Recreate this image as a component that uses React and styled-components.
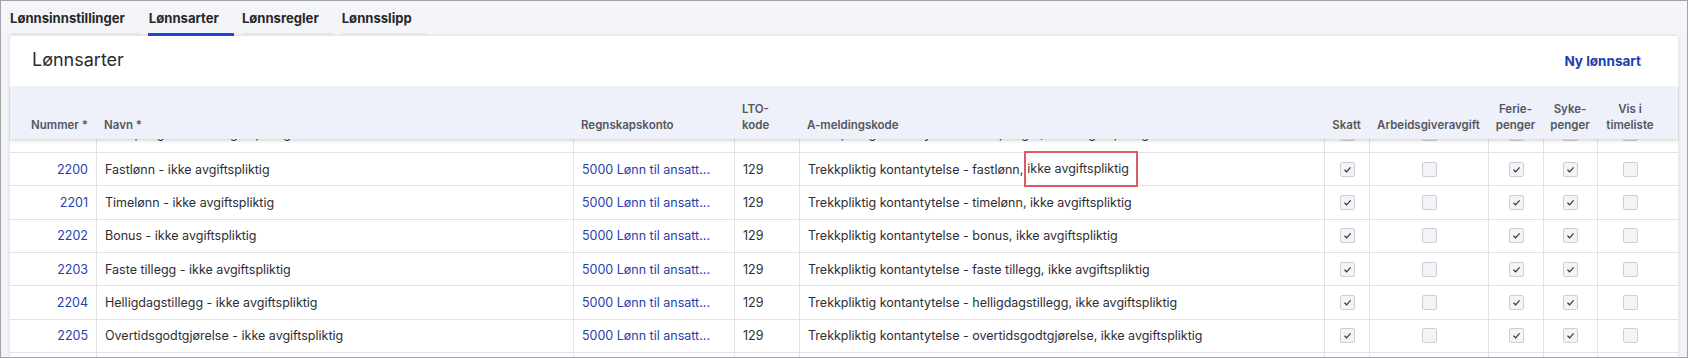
import React from 'react';
import styled, { createGlobalStyle } from 'styled-components';

const COLS = '86px 477px 161px 65px 525px 45px 119px 55px 54px 80px';

const COLORS = {
  page: '#f4f5f9',
  band: '#eef0fa',
  line: '#e1e2e6',
  text: '#2d2e33',
  head: '#55575e',
  link: '#1e3fae',
  blue: '#1d47cf',
  mark: '#dc5b62',
};

const GlobalStyle = createGlobalStyle`
  body {
    margin: 0;
    font-family: Inter, "Noto Sans", sans-serif;
    color: ${COLORS.text};
  }
`;

const columns = [
  { label: 'Nummer *', align: 'right' },
  { label: 'Navn *' },
  { label: 'Regnskapskonto' },
  { label: ['LTO-', 'kode'] },
  { label: 'A-meldingskode' },
  { label: 'Skatt', align: 'center' },
  { label: 'Arbeidsgiveravgift', align: 'center' },
  { label: ['Ferie-', 'penger'], align: 'center' },
  { label: ['Syke-', 'penger'], align: 'center' },
  { label: ['Vis i', 'timeliste'], align: 'center' },
];

const rows = [
  { nr: '2199', name: 'Feriepenger - ikke avgiftspliktig', code: 'feriepenger' },
  { nr: '2200', name: 'Fastlønn - ikke avgiftspliktig', code: 'fastlønn', marked: true },
  { nr: '2201', name: 'Timelønn - ikke avgiftspliktig', code: 'timelønn' },
  { nr: '2202', name: 'Bonus - ikke avgiftspliktig', code: 'bonus' },
  { nr: '2203', name: 'Faste tillegg - ikke avgiftspliktig', code: 'faste tillegg' },
  { nr: '2204', name: 'Helligdagstillegg - ikke avgiftspliktig', code: 'helligdagstillegg' },
  { nr: '2205', name: 'Overtidsgodtgjørelse - ikke avgiftspliktig', code: 'overtidsgodtgjørelse' },
  { nr: '2206', name: 'Reisetid - ikke avgiftspliktig', code: 'reisetid' },
];

const flags = [true, false, true, true, false];

const Checkbox = ({ checked }) => (
  <Box>
    {checked && (
      <svg width="9" height="9" viewBox="0 0 9 9">
        <path d="M1.5 4.8 L3.6 6.8 L7.6 2.4" fill="none" stroke="#34363b" strokeWidth="1.2" />
      </svg>
    )}
  </Box>
);

const App = () => {
  return (
    <Frame>
      <GlobalStyle />
      <Tabs>
        <Tab>Lønnsinnstillinger</Tab>
        <Tab $active>Lønnsarter</Tab>
        <Tab>Lønnsregler</Tab>
        <Tab>Lønnsslipp</Tab>
      </Tabs>
      <Card>
        <CardHeader>
          <Title>Lønnsarter</Title>
          <NewButton>Ny lønnsart</NewButton>
        </CardHeader>
        <HeadRow>
          {columns.map((col, i) => (
            <HeadCell key={i} $align={col.align}>
              {Array.isArray(col.label)
                ? col.label.map((l) => <span key={l}>{l}</span>)
                : col.label}
            </HeadCell>
          ))}
        </HeadRow>
        {rows.map((row, i) => (
          <Row key={row.nr} $clip={i === 0}>
            <Cell $align="right">
              <Inner><Link>{row.nr}</Link></Inner>
            </Cell>
            <Cell>
              <Inner>{row.name}</Inner>
            </Cell>
            <Cell>
              <Inner><Link>5000 Lønn til ansatt...</Link></Inner>
            </Cell>
            <Cell>
              <Inner>129</Inner>
            </Cell>
            <Cell>
              <Inner>
                {row.marked ? (
                  <>
                    Trekkpliktig kontantytelse - {row.code},<Mark>ikke avgiftspliktig</Mark>
                  </>
                ) : (
                  `Trekkpliktig kontantytelse - ${row.code}, ikke avgiftspliktig`
                )}
              </Inner>
            </Cell>
            {flags.map((f, j) => (
              <Cell key={j} $align="center">
                <Inner><Checkbox checked={f} /></Inner>
              </Cell>
            ))}
          </Row>
        ))}
      </Card>
    </Frame>
  );
};

const Frame = styled.div`
  box-sizing: border-box;
  width: 1688px;
  height: 358px;
  overflow: hidden;
  border: 1px solid #a2a3a6;
  background: ${COLORS.page};
  padding: 0 9px;
`;

const Tabs = styled.nav`
  display: flex;
  gap: 8px;
  padding-top: 8px;
`;

const Tab = styled.div`
  font-size: 13.1px;
  font-weight: 700;
  line-height: 18px;
  color: #27282c;
  padding: 0 15px 6px 0;
  border-bottom: 3px solid ${(p) => (p.$active ? COLORS.blue : '#e4e6ee')};
  &:nth-child(2) {
    padding-left: 1px;
  }
`;

const Card = styled.section`
  background: #fff;
  box-shadow: 0 0 3px rgba(0, 0, 0, 0.16);
`;

const CardHeader = styled.header`
  display: flex;
  align-items: center;
  justify-content: space-between;
  height: 50px;
  padding: 0 37px 0 22px;
`;

const Title = styled.h2`
  margin: 0;
  font-size: 18px;
  font-weight: 400;
  color: #2b2c30;
  padding-bottom: 4px;
`;

const NewButton = styled.a`
  font-size: 13.5px;
  font-weight: 700;
  color: ${COLORS.link};
`;

const HeadRow = styled.div`
  position: relative;
  z-index: 1;
  display: grid;
  grid-template-columns: ${COLS};
  height: 53px;
  background: ${COLORS.band};
  box-shadow: 0 2px 3px rgba(0, 0, 0, 0.14);
`;

const HeadCell = styled.div`
  display: flex;
  flex-direction: column;
  justify-content: flex-end;
  align-items: ${(p) =>
    p.$align === 'right' ? 'flex-end' : p.$align === 'center' ? 'center' : 'flex-start'};
  text-align: ${(p) => p.$align || 'left'};
  padding: 0 8px 6px;
  font-size: 11.5px;
  font-weight: 600;
  line-height: 16px;
  color: ${COLORS.head};
  white-space: nowrap;
  &:last-child {
    padding-right: 22px;
  }
`;

const Inner = styled.div`
  display: flex;
  align-items: center;
  flex-shrink: 0;
  height: 32px;
`;

const Cell = styled.div`
  display: flex;
  align-items: center;
  justify-content: ${(p) =>
    p.$align === 'right' ? 'flex-end' : p.$align === 'center' ? 'center' : 'flex-start'};
  padding: 0 8px;
  font-size: 12.5px;
  white-space: nowrap;
  &:not(:first-child) {
    border-left: 1px solid ${COLORS.line};
  }
  &:last-child {
    padding-right: 22px;
  }
`;

const Row = styled.div`
  display: grid;
  grid-template-columns: ${COLS};
  height: ${(p) => (p.$clip ? '13px' : '32.33px')};
  border-bottom: 1px solid ${COLORS.line};

  ${(p) =>
    p.$clip &&
    `
    & > ${Cell} {
      align-items: flex-end;
      overflow: hidden;
    }
    & ${Inner} {
      height: 37px;
    }
  `}
`;

const Link = styled.span`
  color: ${COLORS.link};
`;

const Mark = styled.span`
  display: inline-block;
  margin-left: 1px;
  padding: 8px 7px 8px 1px;
  line-height: 16px;
  border: 2px solid ${COLORS.mark};
`;

const Box = styled.span`
  display: flex;
  align-items: center;
  justify-content: center;
  box-sizing: border-box;
  width: 15px;
  height: 15px;
  border: 1px solid #cdcfd4;
  border-radius: 2px;
  background: #f3f4f7;
`;

export default App;
